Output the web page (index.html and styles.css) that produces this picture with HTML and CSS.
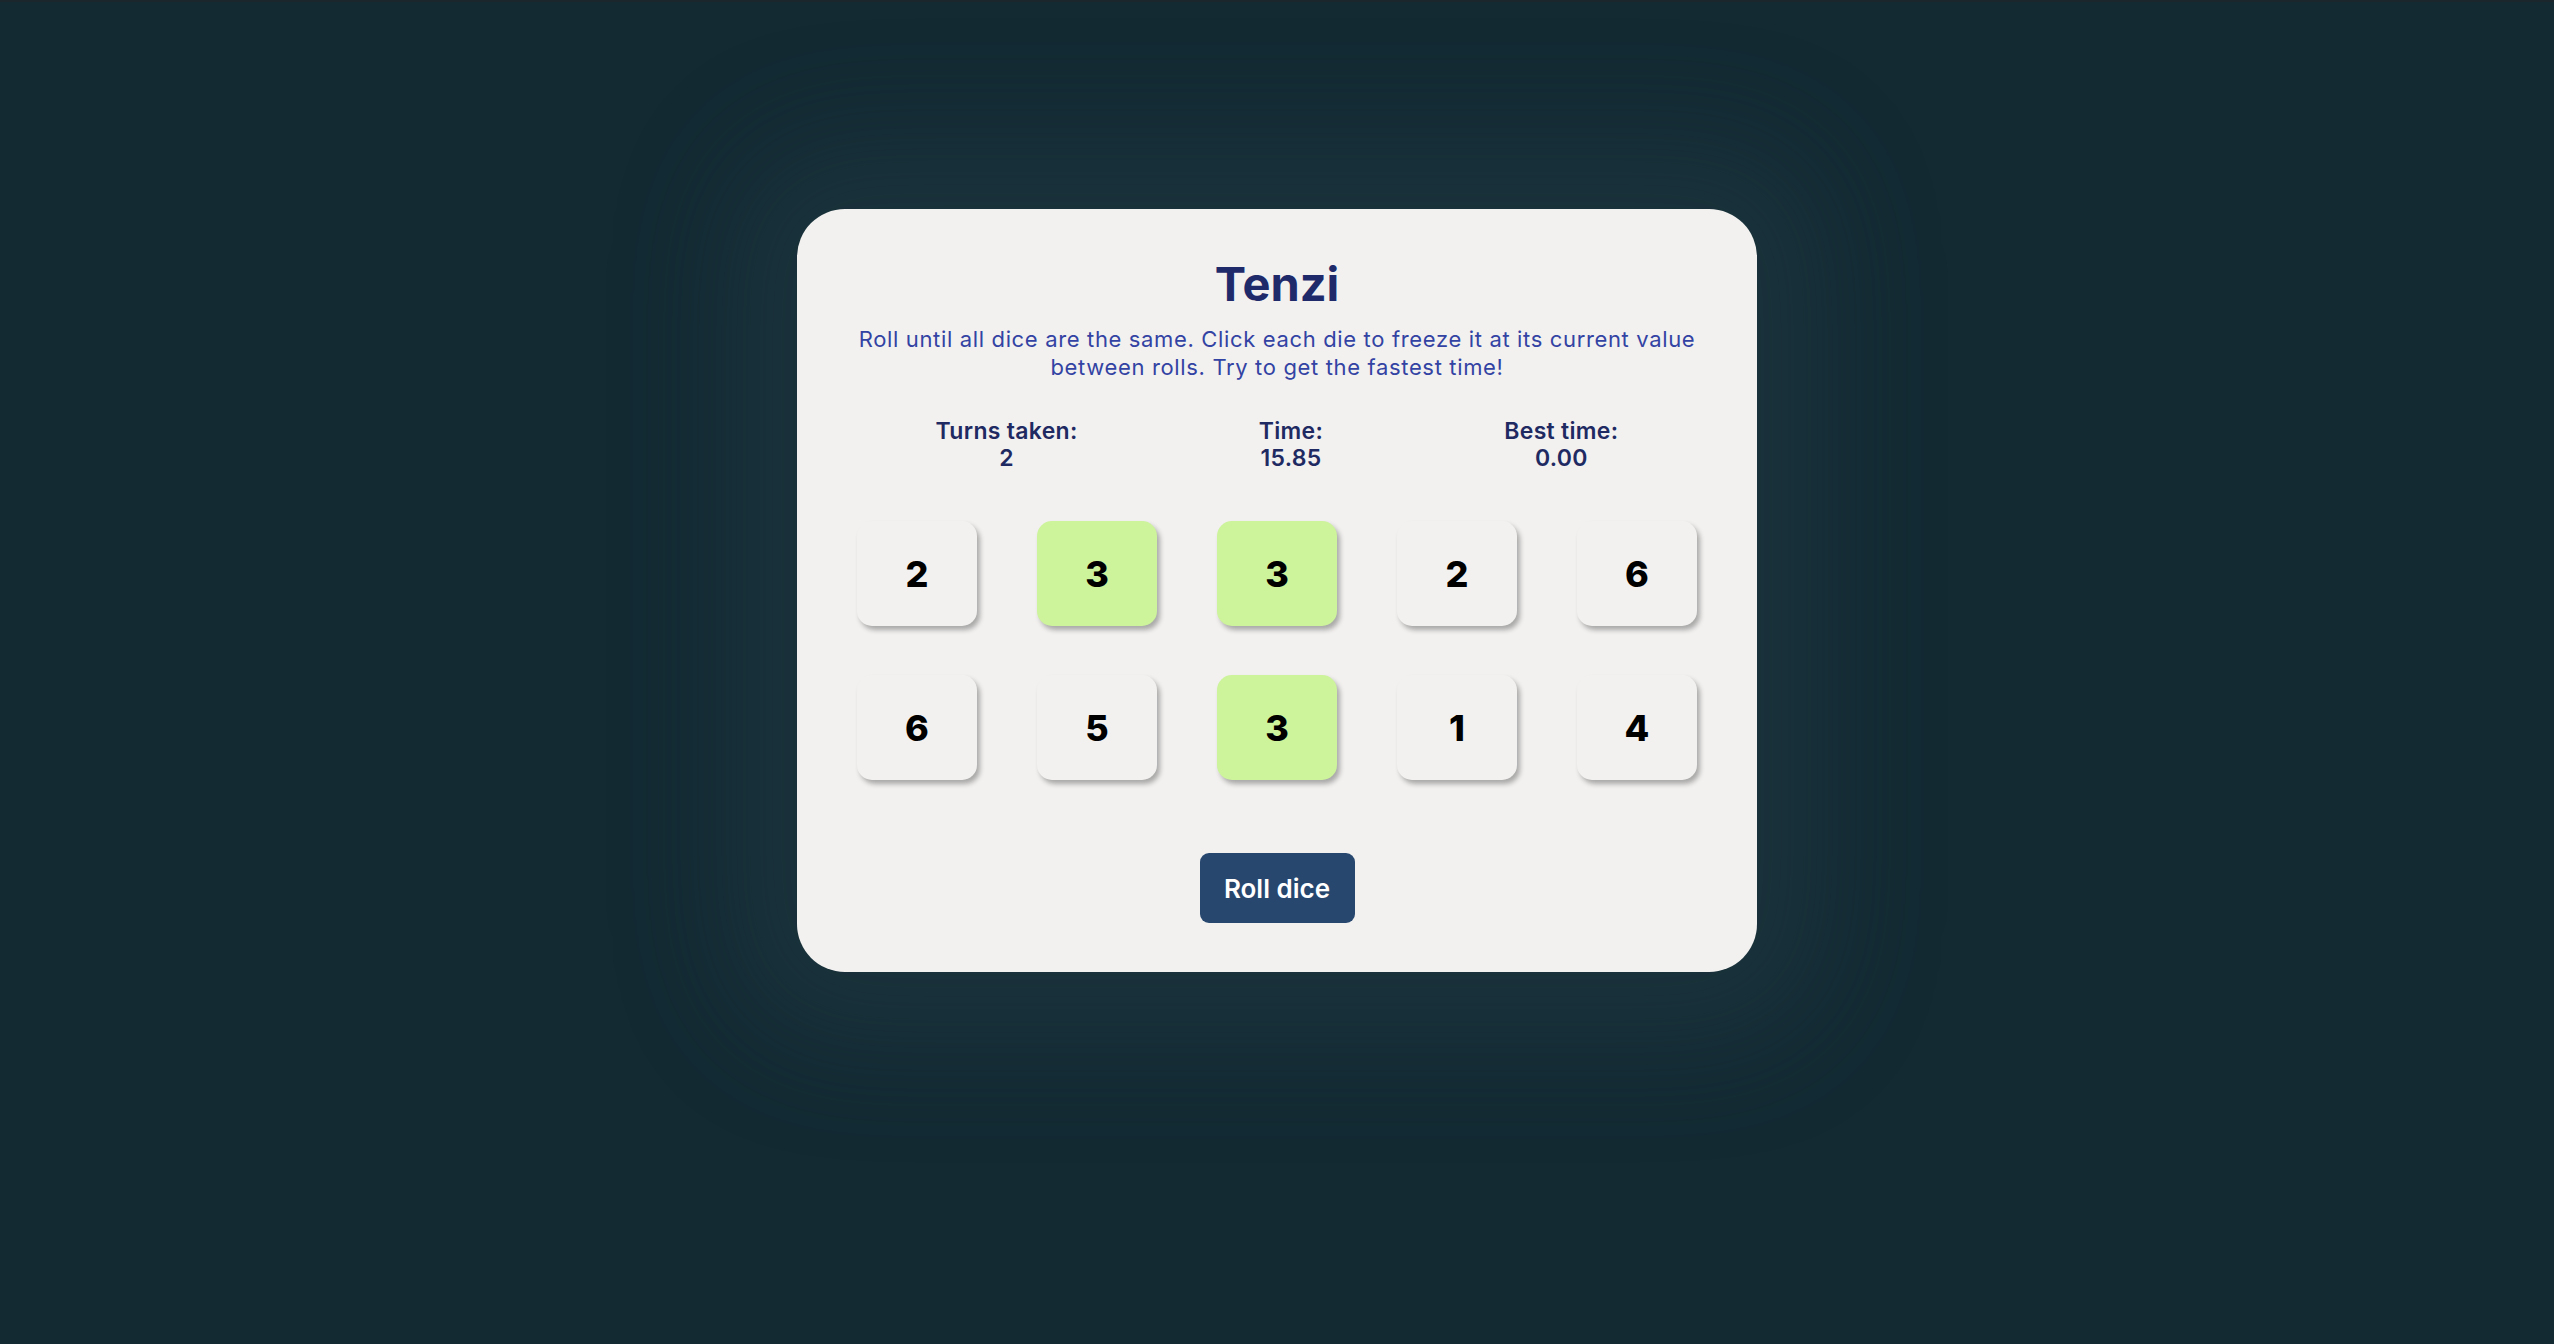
FILE: index.html
```html
<!DOCTYPE html>
<html lang="en">
<head>
<meta charset="utf-8">
<title>Tenzi</title>
<link rel="stylesheet" href="styles.css">
</head>
<body>
<main class="card">
  <h1 class="title">Tenzi</h1>
  <p class="instructions">Roll until all dice are the same. Click each die to freeze it at its current value between rolls. Try to get the fastest time!</p>
  <div class="stats">
    <div class="stat"><div>Turns taken:</div><div>2</div></div>
    <div class="stat"><div>Time:</div><div>15.85</div></div>
    <div class="stat"><div>Best time:</div><div>0.00</div></div>
  </div>
  <div class="dice">
    <button class="die">2</button>
    <button class="die held">3</button>
    <button class="die held">3</button>
    <button class="die">2</button>
    <button class="die">6</button>
    <button class="die">6</button>
    <button class="die">5</button>
    <button class="die held">3</button>
    <button class="die">1</button>
    <button class="die">4</button>
  </div>
  <button class="roll">Roll dice</button>
</main>
</body>
</html>
```
FILE: styles.css
```css
html, body {
  margin: 0;
  height: 100%;
}
body {
  background: #132a33;
  font-family: Inter, "Noto Sans", sans-serif;
  padding-top: 209px;
  box-sizing: border-box;
  border-top: 2px solid #1a262b;
}
.card {
  width: 960px;
  box-sizing: border-box;
  margin: -2px auto 0;
  background: #f2f1f0;
  border-radius: 48px;
  padding: 47px 48px 49px;
  display: flex;
  flex-direction: column;
  align-items: center;
  box-shadow: 0 0 110px 70px rgba(36, 62, 72, 0.42);
}
.title {
  margin: 0;
  font-size: 47px;
  line-height: 56px;
  font-weight: 700;
  color: #1f2a6b;
}
.instructions {
  margin: 13px 0 0;
  font-size: 22px;
  line-height: 28px;
  letter-spacing: 0.65px;
  color: #3343a3;
  text-align: center;
  max-width: 864px;
}
.stats {
  margin-top: 37px;
  width: 100%;
  display: flex;
  justify-content: space-around;
}
.stat {
  text-align: center;
  font-size: 23px;
  line-height: 27px;
  letter-spacing: 0.3px;
  font-weight: 600;
  color: #1f2a62;
}
.dice {
  margin-top: 49px;
  display: grid;
  grid-template-columns: repeat(5, 120px);
  grid-auto-rows: 105px;
  column-gap: 60px;
  row-gap: 49px;
}
.die {
  border: none;
  border-radius: 15px;
  background: #f3f1f0;
  box-shadow: 3px 4px 5px rgba(0, 0, 0, 0.3);
  font-family: Inter, sans-serif;
  font-weight: 800;
  font-size: 36px;
  color: #000;
  padding: 0;
}
.die.held {
  background: #cdf39b;
}
.roll {
  margin-top: 73px;
  width: 155px;
  height: 70px;
  border: none;
  border-radius: 9px;
  background: #27476f;
  color: #fff;
  font-family: Inter, sans-serif;
  font-weight: 600;
  font-size: 26px;
  padding: 0;
}
```
